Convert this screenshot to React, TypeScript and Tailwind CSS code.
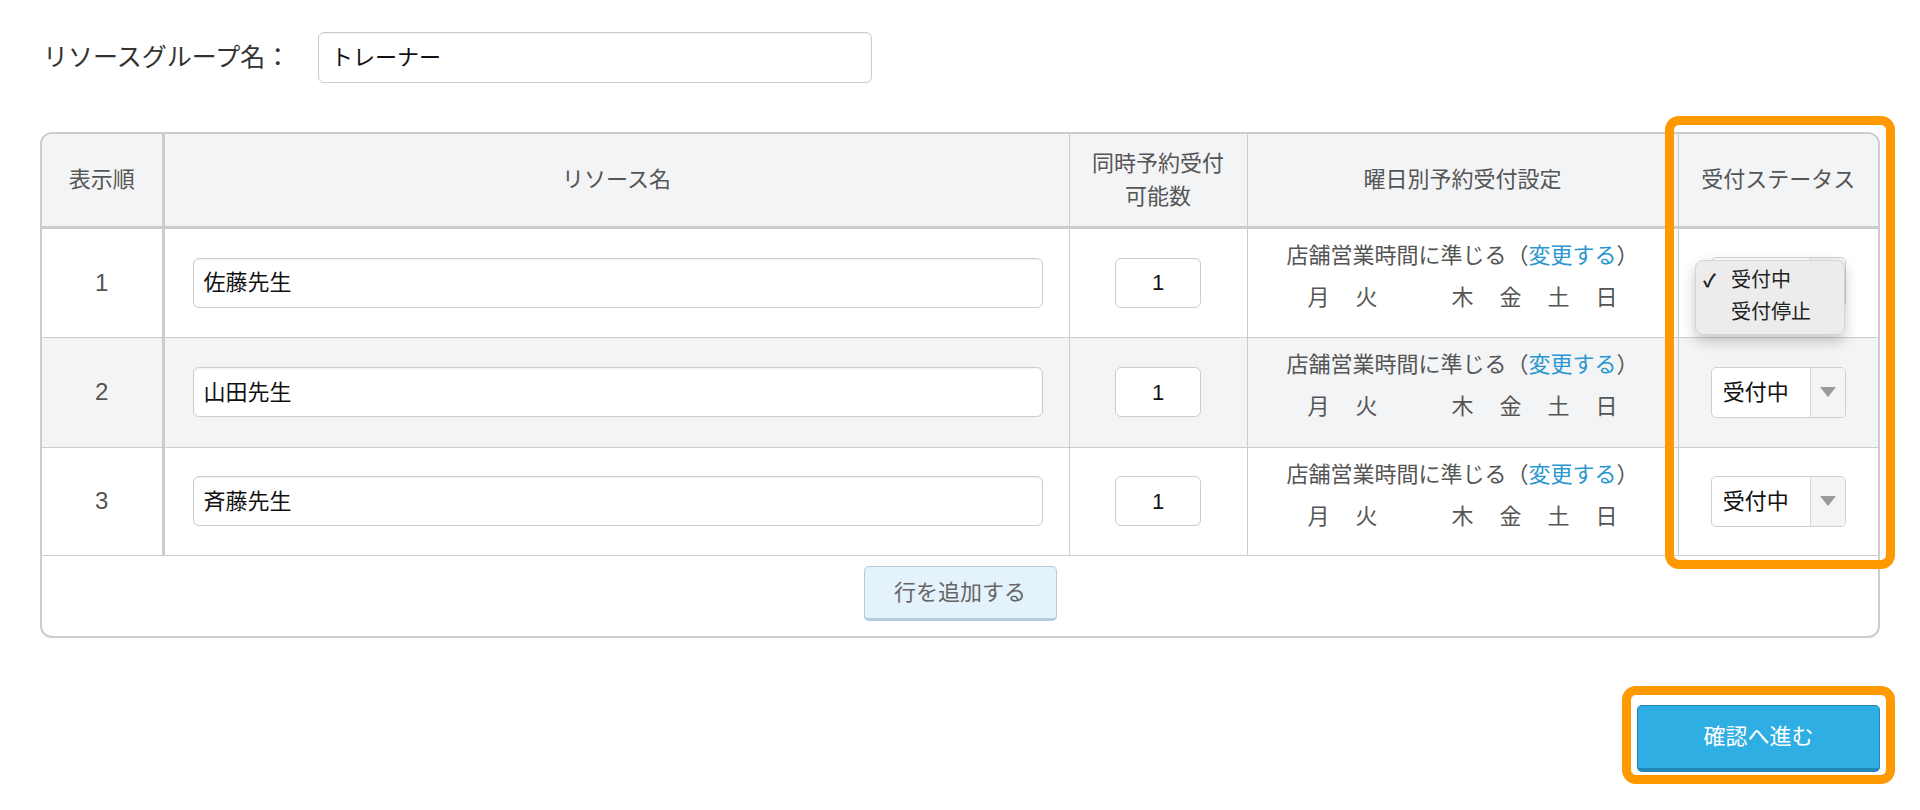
import React from 'react'

const rows = [
  { no: 1, name: '佐藤先生', bg: 'bg-white', h: 'h-[110px]' },
  { no: 2, name: '山田先生', bg: 'bg-[#f3f4f6]', h: 'h-[110px]' },
  { no: 3, name: '斉藤先生', bg: 'bg-white', h: 'h-[108px]' },
]

const days = ['月', '火', '水', '木', '金', '土', '日']

function StatusSelect() {
  return (
    <div className="mx-auto flex h-[51px] w-[135px] overflow-hidden rounded-[5px] border border-[#cfcfcf] bg-white">
      <div className="flex flex-1 items-center pl-[11px] text-[22px] text-[#111]">受付中</div>
      <div className="flex w-[35px] items-center justify-center border-l border-[#d6d6d6] bg-[#f4f4f4]">
        <svg width="16" height="10" viewBox="0 0 16 10">
          <path d="M0 0 L16 0 L8 10 Z" fill="#9a9a9a" />
        </svg>
      </div>
    </div>
  )
}

export default function App() {
  return (
    <div
      className="relative h-[810px] w-[1920px] overflow-hidden bg-white text-[#444]"
      style={{ fontFamily: "'Liberation Sans', 'Noto Sans CJK JP', sans-serif" }}
    >
      {/* Group name */}
      <div className="flex items-center pl-[43px] pt-[32px]">
        <div className="w-[275px] text-[25px] text-[#333]">リソースグループ名：</div>
        <div className="flex h-[51px] w-[554px] items-center rounded-[6px] border border-[#cccccc] pl-[12px] text-[22px] text-[#111] shadow-[inset_0_1px_2px_rgba(0,0,0,0.06)]">
          トレーナー
        </div>
      </div>

      {/* Table */}
      <div className="ml-[40px] mt-[49px] w-[1840px] overflow-hidden rounded-[12px] border-2 border-[#cccccc]">
        <table className="w-full table-fixed border-collapse text-[22px]">
          <colgroup>
            <col className="w-[121px]" />
            <col className="w-[906px]" />
            <col className="w-[178px]" />
            <col className="w-[431px]" />
            <col className="w-[200px]" />
          </colgroup>
          <thead>
            <tr className="h-[93px] bg-[#f3f4f6] text-[#555]">
              <th className="border-b-[3px] border-r-[3px] border-[#cccccc] font-normal">表示順</th>
              <th className="border-b-[3px] border-r border-[#cccccc] font-normal">リソース名</th>
              <th className="border-b-[3px] border-r border-[#cccccc] font-normal leading-[33px]">
                同時予約受付
                <br />
                可能数
              </th>
              <th className="border-b-[3px] border-r border-[#cccccc] font-normal">曜日別予約受付設定</th>
              <th className="border-b-[3px] border-[#cccccc] font-normal">受付ステータス</th>
            </tr>
          </thead>
          <tbody>
            {rows.map((r) => (
              <tr key={r.no} className={`${r.h} ${r.bg}`}>
                <td className="border-b border-r-[3px] border-[#cccccc] text-center text-[24px] text-[#555]">{r.no}</td>
                <td className="border-b border-r border-[#cccccc] pl-[28px] pr-[26px]">
                  <div className="flex h-[50px] items-center rounded-[6px] border border-[#cccccc] bg-white pl-[10px] text-[22px] text-[#111] shadow-[inset_0_1px_2px_rgba(0,0,0,0.06)]">
                    {r.name}
                  </div>
                </td>
                <td className="border-b border-r border-[#cccccc]">
                  <div className="mx-auto flex h-[50px] w-[86px] items-center justify-center rounded-[6px] border border-[#cccccc] bg-white text-[22px] text-[#111]">
                    1
                  </div>
                </td>
                <td className="border-b border-r border-[#cccccc] pt-[6px] align-top text-[#555]">
                  <div className="h-[42px] text-center leading-[42px]">
                    店舗営業時間に準じる（<span className="text-[#2a97d0]">変更する</span>）
                  </div>
                  <div className="flex h-[42px] justify-center leading-[42px]">
                    {days.map((d) => (
                      <span key={d} className={`w-[48px] text-center ${d === '水' ? 'invisible' : ''}`}>
                        {d}
                      </span>
                    ))}
                  </div>
                </td>
                <td className="border-b border-[#cccccc]">
                  <StatusSelect />
                </td>
              </tr>
            ))}
          </tbody>
        </table>
        <div className="flex h-[80px] items-start justify-center pt-[10px]">
          <button className="h-[55px] w-[193px] rounded-[5px] border border-b-[3px] border-[#b5cadb] bg-[#e4f2fc] text-[22px] text-[#666]">
            行を追加する
          </button>
        </div>
      </div>

      {/* Confirm */}
      <div className="ml-[40px] mt-[67px] flex w-[1840px] justify-end">
        <button className="h-[67px] w-[243px] rounded-[5px] border border-b-[4px] border-[#2386b8] bg-[#2eaee2] text-[22px] text-white">
          確認へ進む
        </button>
      </div>

      {/* Open dropdown on row 1 */}
      <div className="absolute left-[1695px] top-[260px] h-[75px] w-[150px] rounded-[8px] border border-[#d4d4d4] bg-[#ececec] text-[20px] text-[#222] shadow-[0_6px_14px_rgba(0,0,0,0.22)]">
        <div className="flex h-[34px] items-end">
          <span className="w-[35px] pl-[7px] text-[18px] font-bold">✓</span>
          <span>受付中</span>
        </div>
        <div className="flex h-[34px] items-center">
          <span className="w-[35px]" />
          <span>受付停止</span>
        </div>
      </div>

      {/* Highlights */}
      <div className="pointer-events-none absolute left-[1665px] top-[116px] h-[453px] w-[230px] rounded-[14px] border-[9px] border-[#ff9900]" />
      <div className="pointer-events-none absolute left-[1622px] top-[686px] h-[98px] w-[273px] rounded-[14px] border-[9px] border-[#ff9900]" />
    </div>
  )
}
